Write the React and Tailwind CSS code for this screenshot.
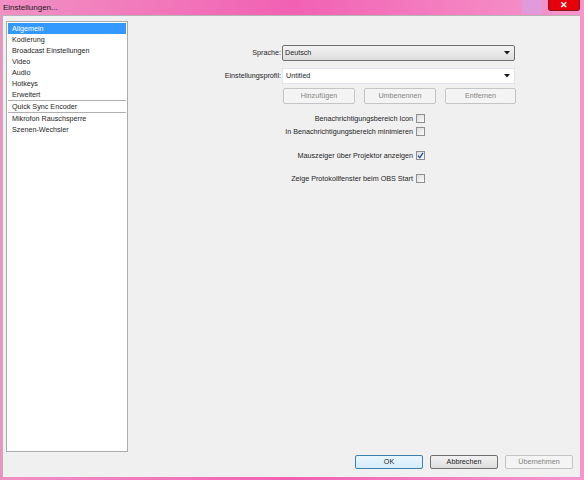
import React from 'react';

const font = { fontFamily: '"Liberation Sans", Arial, sans-serif' };

const items = [
  { label: 'Allgemein', selected: true },
  { label: 'Kodierung' },
  { label: 'Broadcast Einstellungen' },
  { label: 'Video' },
  { label: 'Audio' },
  { label: 'Hotkeys' },
  { label: 'Erweitert', lineAfter: true },
  { label: 'Quick Sync Encoder', lineAfter: true },
  { label: 'Mikrofon Rauschsperre' },
  { label: 'Szenen-Wechsler' },
];

const Arrow = () => (
  <svg width="6" height="4" viewBox="0 0 6 4" className="shrink-0">
    <path d="M0 0H6L3 3.5Z" fill="#1a1a1a" />
  </svg>
);

const Checkbox = ({ checked }) => (
  <div className="w-[9px] h-[9px] border border-[#8e8f8f] bg-gradient-to-br from-[#dcdcdc] to-[#fbfbfb] flex items-center justify-center shrink-0">
    {checked && (
      <svg width="7" height="7" viewBox="0 0 7 7">
        <path d="M1 3.6L2.8 5.6L6 0.8" stroke="#2a4fa8" strokeWidth="1.3" fill="none" />
      </svg>
    )}
  </div>
);

const CheckRow = ({ label, checked, className }) => (
  <div className={`w-[297px] h-[11px] flex items-center justify-end gap-[3px] ${className}`}>
    <span className="text-[7.2px] leading-[11px] text-[#1e1e1e] whitespace-nowrap">{label}</span>
    <Checkbox checked={checked} />
  </div>
);

const DisabledButton = ({ label, w }) => (
  <div className={`${w} h-[16px] border border-[#c2c4c6] rounded-[2px] bg-[#f4f4f4] flex items-center justify-center text-[7.2px] text-[#838383]`}>
    {label}
  </div>
);

export default function App() {
  return (
    <div className="w-[584px] h-[480px] flex flex-col bg-gradient-to-r from-[#f090c4] via-[#f160b3] to-[#f597cc]" style={font}>
      {/* title bar */}
      <div className="h-[15px] w-full flex items-start shrink-0">
        <span className="ml-[3px] mt-[2px] text-[8px] leading-[11px] text-[#1b1b1b] whitespace-nowrap">Einstellungen...</span>
        <div className="flex-1" />
        <div className="w-[20px] h-[14px] bg-[#d1a3e6] opacity-60 shrink-0 mr-[6px]" />
        <div className="w-[32px] h-[11px] mr-[4px] shrink-0 rounded-b-[3px] bg-red-600 border border-t-0 border-red-900 flex items-center justify-center text-white text-[9px] leading-none font-bold">
          ✕
        </div>
      </div>

      {/* client area */}
      <div className="ml-[2px] mr-[4px] h-[462px] bg-[#f0f0f0] border-t border-l border-[#b4b4b4] flex flex-col">
        <div className="flex pt-[5px]">
          {/* list */}
          <div className="ml-[3px] w-[122px] h-[431px] bg-white border border-[#a9abad] p-[1px] flex flex-col">
            {items.map((it) => (
              <React.Fragment key={it.label}>
                <div
                  className={`h-[11px] pl-[4px] text-[7.2px] leading-[11px] whitespace-nowrap ${
                    it.selected ? 'bg-[#3399ff] text-white' : 'text-[#1e1e1e]'
                  }`}
                >
                  {it.label}
                </div>
                {it.lineAfter && <div className="h-[1px] bg-[#b0b0b0]" />}
              </React.Fragment>
            ))}
          </div>

          {/* form */}
          <div className="flex-1 flex flex-col">
            <div className="mt-[24px] flex items-center h-[16px]">
              <div className="w-[153px] text-right text-[7.2px] text-[#1e1e1e]">Sprache:</div>
              <div className="ml-[1px] w-[233px] h-[16px] border border-[#707070] rounded-[2px] bg-gradient-to-b from-[#f4f4f4] to-[#dcdcdc] flex items-center justify-between pl-[2px] pr-[4px]">
                <span className="text-[7.2px] text-[#1e1e1e]">Deutsch</span>
                <Arrow />
              </div>
            </div>
            <div className="mt-[7px] flex items-center h-[16px]">
              <div className="w-[153px] text-right text-[7.2px] text-[#1e1e1e]">Einstellungsprofil:</div>
              <div className="ml-[1px] w-[233px] h-[16px] border border-[#e2e3ea] bg-white flex items-center justify-between pl-[3px] pr-[4px]">
                <span className="text-[7.2px] text-[#1e1e1e]">Untitled</span>
                <Arrow />
              </div>
            </div>
            <div className="mt-[4px] ml-[155px] flex gap-[9px]">
              <DisabledButton label="Hinzufügen" w="w-[72px]" />
              <DisabledButton label="Umbenennen" w="w-[72px]" />
              <DisabledButton label="Entfernen" w="w-[71px]" />
            </div>

            <CheckRow className="mt-[9px]" label="Benachrichtigungsbereich Icon" />
            <CheckRow className="mt-[2px]" label="In Benachrichtigungsbereich minimieren" />
            <CheckRow className="mt-[13px]" label="Mauszeiger über Projektor anzeigen" checked />
            <CheckRow className="mt-[12px]" label="Zeige Protokollfenster beim OBS Start" />
          </div>
        </div>

        {/* bottom buttons */}
        <div className="mt-[3px] flex justify-end gap-[7px] pr-[7px]">
          <div className="w-[68px] h-[14px] border border-[#3c7fb1] rounded-[2px] bg-gradient-to-b from-[#eaf6fd] to-[#d4ecfa] flex items-center justify-center text-[7.2px] text-[#1e1e1e]">
            OK
          </div>
          <div className="w-[68px] h-[14px] border border-[#707070] rounded-[2px] bg-gradient-to-b from-[#f2f2f2] to-[#dddddd] flex items-center justify-center text-[7.2px] text-[#1e1e1e]">
            Abbrechen
          </div>
          <div className="w-[68px] h-[14px] border border-[#c2c4c6] rounded-[2px] bg-[#f4f4f4] flex items-center justify-center text-[7.2px] text-[#838383]">
            Übernehmen
          </div>
        </div>
      </div>
    </div>
  );
}
